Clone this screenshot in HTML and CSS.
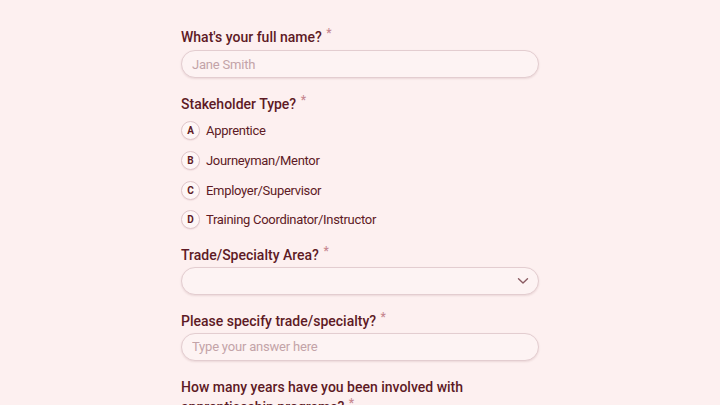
FILE: index.html
```html
<!DOCTYPE html>
<html lang="en">
<head>
  <meta charset="UTF-8">
  <title>Apprenticeship Survey</title>
  <link rel="stylesheet" href="styles.css">
</head>
<body>
  <form class="survey">
    <div class="question">
      <label class="q-label" for="fullName">What's your full name? <span class="req">*</span></label>
      <input id="fullName" class="text-field" type="text" placeholder="Jane Smith">
    </div>

    <div class="question question-choices">
      <div class="q-label">Stakeholder Type? <span class="req">*</span></div>
      <div class="choices">
        <div class="choice"><span class="key">A</span>Apprentice</div>
        <div class="choice"><span class="key">B</span>Journeyman/Mentor</div>
        <div class="choice"><span class="key">C</span>Employer/Supervisor</div>
        <div class="choice"><span class="key">D</span>Training Coordinator/Instructor</div>
      </div>
    </div>

    <div class="question">
      <label class="q-label" for="trade">Trade/Specialty Area? <span class="req">*</span></label>
      <div class="select-field">
        <span class="select-value"></span>
        <svg class="chevron" width="12" height="8" viewBox="0 0 12 8">
          <path d="M1.5 1.8 L6 6 L10.5 1.8" fill="none" stroke="#8a5b62" stroke-width="1.4" stroke-linecap="round" stroke-linejoin="round"/>
        </svg>
      </div>
    </div>

    <div class="question">
      <label class="q-label" for="specify">Please specify trade/specialty? <span class="req">*</span></label>
      <input id="specify" class="text-field" type="text" placeholder="Type your answer here">
    </div>

    <div class="question">
      <div class="q-label">How many years have you been involved with apprenticeship programs? <span class="req">*</span></div>
    </div>
  </form>
</body>
</html>
```

FILE: styles.css
```css
body {
  margin: 0;
  background: #fdf0f0;
  font-family: Roboto, "Open Sans", sans-serif;
  color: #5e1a25;
}
.survey {
  width: 358px;
  margin: 0 auto;
  padding-top: 27px;
}
.question {
  margin-bottom: 16px;
}
.question-choices {
  margin-bottom: 10px;
}
.q-label {
  display: block;
  font-size: 14px;
  font-weight: 500;
  line-height: 20px;
  margin-bottom: 2px;
  color: #5e1a25;
}
.question:first-child .q-label {
  margin-bottom: 3px;
}
.req {
  position: relative;
  top: -5px;
  line-height: 0;
  color: #c78891;
  font-size: 12px;
  margin-left: 1px;
}
.text-field, .select-field {
  box-sizing: border-box;
  width: 100%;
  height: 28px;
  border: 1px solid #e3cdd0;
  border-radius: 14px;
  background: #fdf3f3;
  box-shadow: 0 1px 2px rgba(110, 40, 50, 0.12);
  font-family: inherit;
  font-size: 13px;
  letter-spacing: -0.2px;
  padding: 0 10px;
  color: #5e1a25;
  outline: none;
}
.text-field::placeholder {
  color: #c3a3a8;
}
.select-field {
  display: flex;
  align-items: center;
  justify-content: space-between;
  padding-right: 9px;
}
.choices {
  display: flex;
  flex-direction: column;
}
.choice {
  display: flex;
  align-items: center;
  gap: 6px;
  height: 29.7px;
  font-size: 13px;
  letter-spacing: -0.3px;
  color: #5e1a25;
}
.key {
  box-sizing: border-box;
  width: 19px;
  height: 19px;
  border: 1px solid #e0c6ca;
  border-radius: 50%;
  background: #fef6f6;
  box-shadow: 0 1px 1px rgba(110, 40, 50, 0.08);
  display: flex;
  align-items: center;
  justify-content: center;
  font-size: 10px;
  font-weight: 700;
  letter-spacing: 0;
}
```
